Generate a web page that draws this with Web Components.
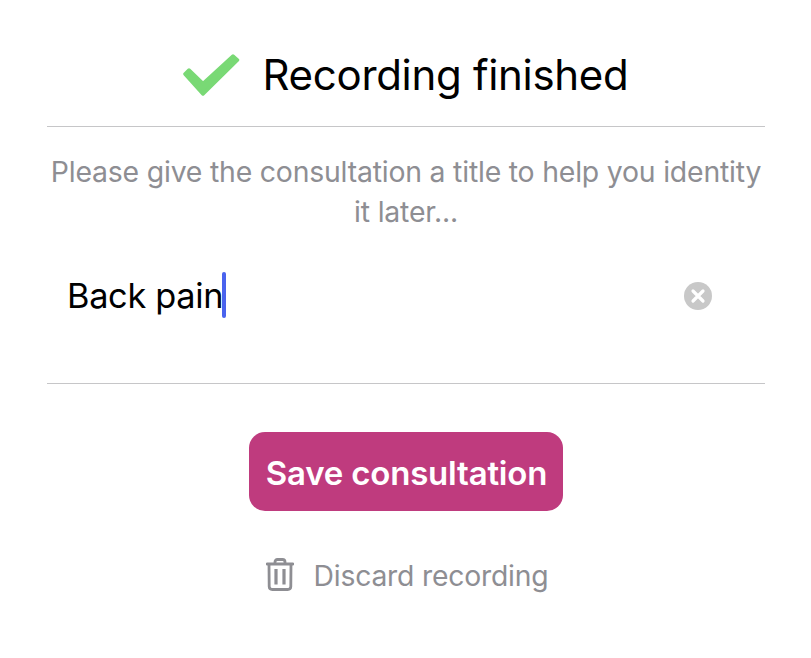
<!DOCTYPE html>
<html>
<head>
<meta charset="utf-8">
<style>
  html, body { margin: 0; background: #fff; }
  body { font-family: "Inter", "Liberation Sans", sans-serif; }
</style>
</head>
<body>
<recording-dialog>
  <span slot="title">Recording finished</span>
  <span slot="prompt">Please give the consultation a title to help you identity it later...</span>
  <title-input value="Back pain"></title-input>
  <save-button slot="save">Save consultation</save-button>
  <discard-link slot="discard">Discard recording</discard-link>
</recording-dialog>

<script>
class RecordingDialog extends HTMLElement {
  constructor() {
    super();
    this.attachShadow({ mode: "open" });
  }

  connectedCallback() {
    this.shadowRoot.innerHTML = `
    <style>
      :host {
        display: flex;
        flex-direction: column;
        width: 811px;
        height: 658px;
        box-sizing: border-box;
        padding: 0 46px 0 47px;
      }
      header {
        height: 127px;
        box-sizing: border-box;
        padding: 23px 1px 0 0;
        border-bottom: 1px solid #c6c6c8;
        display: flex;
        align-items: center;
        justify-content: center;
        gap: 23px;
        font-size: 42px;
        letter-spacing: -0.3px;
        color: #000;
      }
      header svg { display: block; width: 57px; height: 43px; margin-top: 1px; }
      .prompt {
        margin-top: 25px;
        text-align: center;
        font-size: 28.4px;
        line-height: 40px;
        letter-spacing: -0.2px;
        color: #8e8e93;
      }
      .field {
        height: 151px;
        border-bottom: 1px solid #c6c6c8;
      }
      .actions {
        display: flex;
        flex-direction: column;
        align-items: center;
      }
    </style>
    <header>
      <svg viewBox="0 0 57 43">
        <path d="M2 20 L6 16 L20 29.5 L50 2 L54.5 6 L20 40 Z" fill="#79d975" stroke="#79d975" stroke-width="3.5" stroke-linejoin="round"/>
      </svg>
      <slot name="title"></slot>
    </header>
    <div class="prompt"><slot name="prompt"></slot></div>
    <div class="field"><slot></slot></div>
    <div class="actions">
      <slot name="save"></slot>
      <slot name="discard"></slot>
    </div>`;
  }
}

class TitleInput extends HTMLElement {
  constructor() {
    super();
    this.attachShadow({ mode: "open" });
  }

  connectedCallback() {
    this.shadowRoot.innerHTML = `
    <style>
      :host {
        display: flex;
        align-items: center;
        justify-content: space-between;
        height: 48px;
        padding: 0 53px 0 20px;
        margin-top: 39px;
        font-size: 34.3px;
        letter-spacing: -0.3px;
        color: #000;
      }
      .text { display: flex; align-items: center; }
      .caret {
        width: 4px;
        height: 46px;
        margin-left: -1px;
        border-radius: 2px;
        background: #4a63ee;
      }
      svg { display: block; width: 28px; height: 28px; margin-top: 1px; }
    </style>
    <div class="text"><span>${this.getAttribute("value")}</span><div class="caret"></div></div>
    <svg viewBox="0 0 28 28">
      <circle cx="14" cy="14" r="14" fill="#c8c8c8"/>
      <path d="M9 9 L19 19 M19 9 L9 19" stroke="#fff" stroke-width="3.2" stroke-linecap="round"/>
    </svg>`;
  }
}

class SaveButton extends HTMLElement {
  constructor() {
    super();
    this.attachShadow({ mode: "open" });
  }

  connectedCallback() {
    this.shadowRoot.innerHTML = `
    <style>
      :host {
        display: flex;
        align-items: center;
        justify-content: center;
        width: 314px;
        height: 79px;
        box-sizing: border-box;
        padding: 2px 0 0 1px;
        margin-top: 48px;
        border-radius: 16px;
        background: #bf3b7e;
        color: #fff;
        font-size: 33px;
        font-weight: 600;
        letter-spacing: -0.2px;
      }
    </style>
    <slot></slot>`;
  }
}

class DiscardLink extends HTMLElement {
  constructor() {
    super();
    this.attachShadow({ mode: "open" });
  }

  connectedCallback() {
    this.shadowRoot.innerHTML = `
    <style>
      :host {
        display: flex;
        align-items: center;
        gap: 20px;
        margin: 46px 0 0 2px;
        height: 38px;
        font-size: 28.3px;
        letter-spacing: -0.2px;
        color: #8e8e93;
      }
      svg { display: block; width: 28px; height: 33px; margin-top: -4px; }
    </style>
    <svg viewBox="0 0 28 33" fill="none" stroke="#8e8e93">
      <path d="M1 6 H27" stroke-width="2.8" stroke-linecap="round"/>
      <path d="M9 6 V4 Q9 1.5 11.5 1.5 H16.5 Q19 1.5 19 4 V6" stroke-width="2.8"/>
      <path d="M3 6 L3.2 28.5 Q3.3 31.5 6.3 31.5 H21.7 Q24.7 31.5 24.8 28.5 L25 6" stroke-width="2.8"/>
      <path d="M10 11 V26.5 M18 11 V26.5" stroke-width="3.2"/>
    </svg>
    <slot></slot>`;
  }
}

customElements.define("recording-dialog", RecordingDialog);
customElements.define("title-input", TitleInput);
customElements.define("save-button", SaveButton);
customElements.define("discard-link", DiscardLink);
</script>
</body>
</html>
